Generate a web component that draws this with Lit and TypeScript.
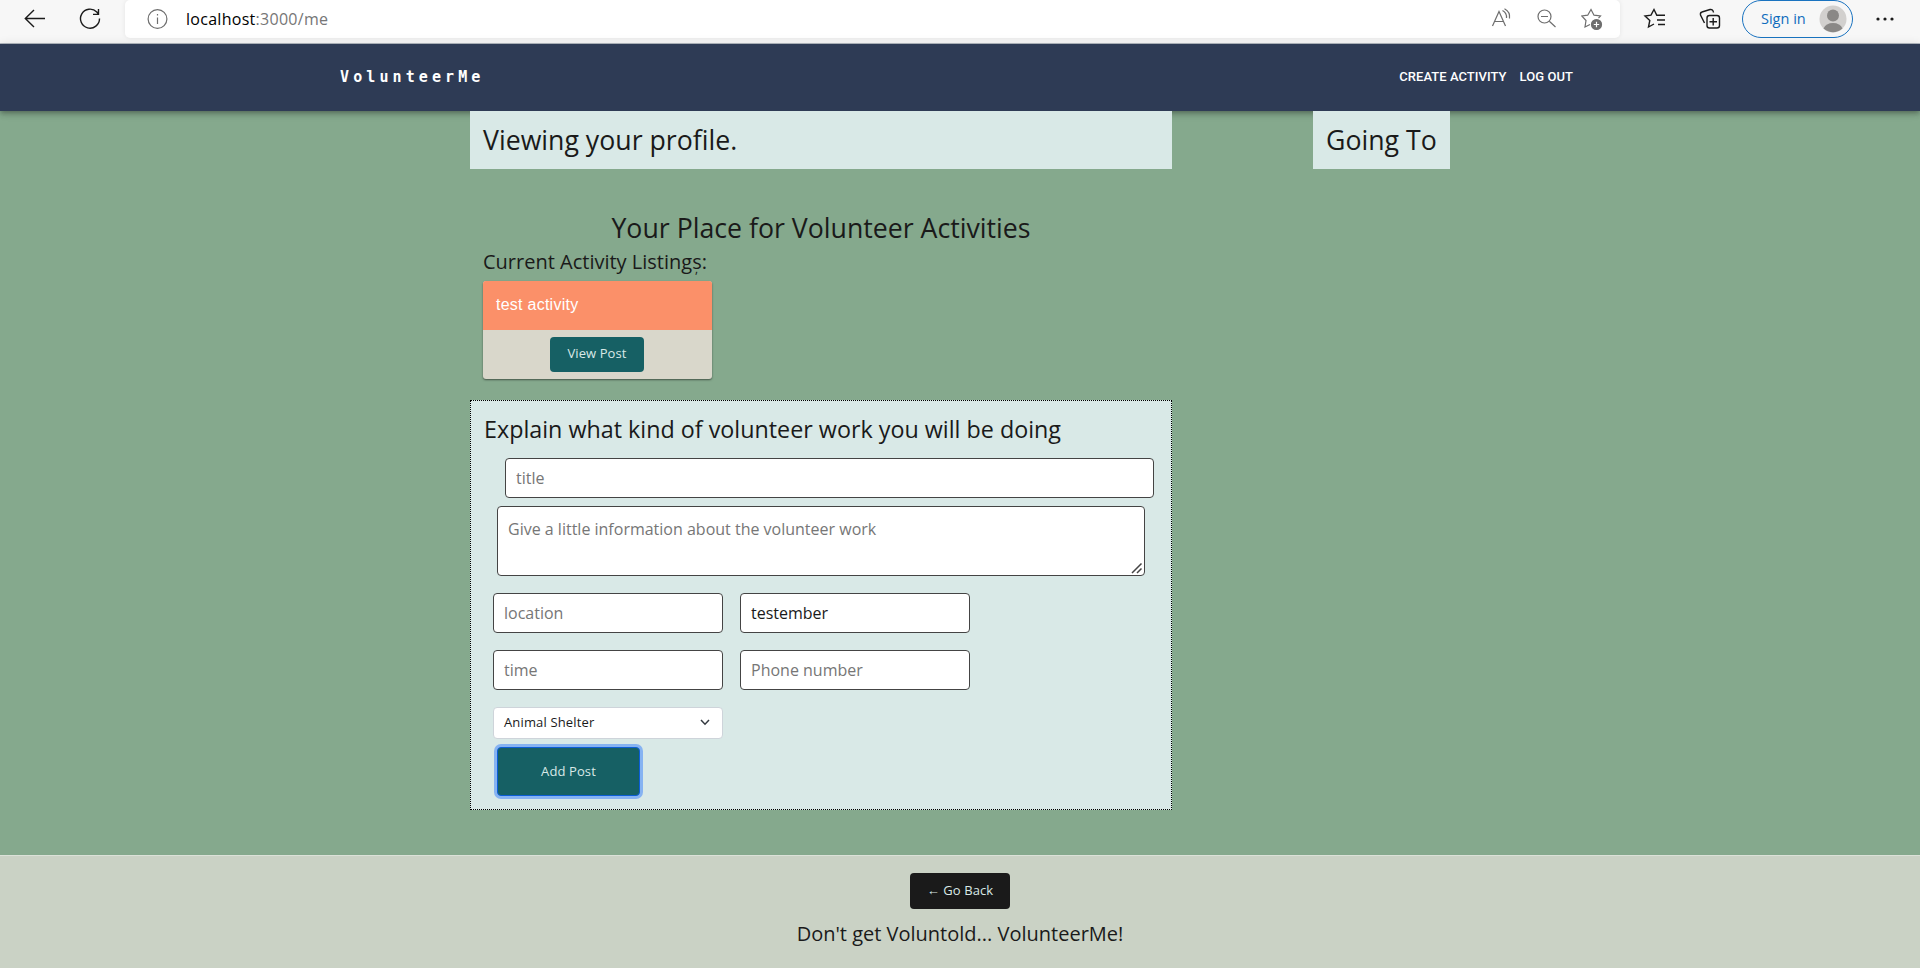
import { LitElement, html, css } from "lit";
import { customElement } from "lit/decorators.js";

@customElement("browser-bar")
class BrowserBar extends LitElement {
  static styles = css`
    :host {
      display: flex;
      height: 43px;
      background: #f7f7f7;
      border-bottom: 1px solid #b4bac2;
      font-family: "Open Sans", sans-serif;
    }
    .nav { display: flex; width: 125px; padding-left: 22px; box-sizing: border-box; gap: 32px; }
    .address {
      display: flex;
      width: 1495px;
      height: 38px;
      background: #fff;
      border-radius: 5px;
      box-shadow: 0 0 5px rgba(0, 0, 0, 0.08);
    }
    .info { margin-left: 20px; }
    .url { margin-left: 17px; width: 1305px; font-size: 16px; line-height: 38px; color: #767676; letter-spacing: 0.28px; }
    .url b { font-weight: 400; color: #000; }
    .tools { display: flex; gap: 21px; }
    svg { display: block; width: 24px; height: 38px; flex: none; fill: none; stroke: #1b1b1b; stroke-width: 1.4; }
    .address svg { stroke: #6e6e6e; stroke-width: 1.2; }
    .right { display: flex; padding-left: 23px; }
    .right svg + svg { margin-left: 31px; }
    .signin {
      display: flex;
      align-items: center;
      justify-content: space-between;
      box-sizing: border-box;
      width: 111px;
      height: 38px;
      margin: 0 20px 0 20px;
      padding: 0 5px 0 18px;
      border: 1.4px solid #1a73c0;
      border-radius: 19px;
      font-size: 14.5px;
      color: #0f6cbd;
    }
    .signin svg { width: 28px; height: 28px; stroke: none; }
  `;
  render() {
    return html`
      <div class="nav">
        <svg viewBox="0 0 24 38"><path d="M3 18.5H23M12 10L3.3 18.5L12 27" /></svg>
        <svg viewBox="0 0 24 38"><path d="M21.5 18.5A9.5 9.5 0 1 1 18.8 12L20.5 14M20.5 9V14.4H15" /></svg>
      </div>
      <div class="address">
        <svg class="info" viewBox="0 0 24 38"><circle cx="12.5" cy="19" r="9.4" /><path d="M12.5 17.5V24M12.5 14V15.5" /></svg>
        <div class="url"><b>localhost</b>:3000/me</div>
        <div class="tools">
          <svg viewBox="0 0 24 38"><path d="M1.5 26L8 11.5L14.5 26M3.8 21.5H12.2M11.5 10.5Q16 13 15.5 18M13.5 8.8Q19.5 12 18.5 18.5" /></svg>
          <svg viewBox="0 0 24 38"><circle cx="8.5" cy="16.5" r="6.5" /><path d="M13.3 21.3L19.5 27M5 16.5H12" /></svg>
          <svg viewBox="0 0 24 38"><path d="M9 24.5L4 27L5 20.5L0.8 16L6.7 15.2L10 9.5L13 15.2L19.5 16L17.5 18.2" /><circle cx="15.5" cy="24.5" r="5" fill="#6e6e6e" /><path d="M12.8 24.5H18.2M15.5 21.8V27.2" stroke="#fff" /></svg>
        </div>
      </div>
      <div class="right">
        <svg viewBox="0 0 24 38"><path d="M11 24L5.5 27L6.8 20.5L2 16L8 15.2L11 9.5L13.8 15.2H22M14 20H22M15 24.5H22" /></svg>
        <svg viewBox="0 0 24 38"><rect x="9" y="15.5" width="12.5" height="12.5" rx="2.5" /><path d="M15.2 18V25.5M11.5 21.7H19M6.5 23L2.5 15Q2 12.5 4 12L12 9.5Q15 9 15.5 12.5" /></svg>
        <div class="signin">
          Sign in
          <svg viewBox="0 0 28 28"><circle cx="14" cy="14" r="13.5" fill="#d2d0ce" /><circle cx="14" cy="10.5" r="6" fill="#8a8886" /><path d="M4.5 23.5Q7 18 14 18T23.5 23.5Q14 31 4.5 23.5Z" fill="#8a8886" /></svg>
        </div>
        <svg viewBox="0 0 24 38"><g fill="#1b1b1b" stroke="none"><circle cx="5" cy="19" r="1.6" /><circle cx="12" cy="19" r="1.6" /><circle cx="19" cy="19" r="1.6" /></g></svg>
      </div>
    `;
  }
}

@customElement("app-root")
class AppRoot extends LitElement {
  static styles = css`
    :host {
      display: flex;
      flex-direction: column;
      height: 968px;
      overflow: hidden;
      background: #85a98d;
      color: #1a1a1a;
      font: 400 16px/1.5 "Open Sans", sans-serif;
    }
    h1, h2, h3, h4, p { margin: 0; font-weight: 400; }
    .bar {
      flex: none;
      display: flex;
      align-items: center;
      justify-content: space-between;
      box-sizing: border-box;
      height: 67px;
      padding: 0 347px 2px 340px;
      background: #2e3b55;
      color: #fff;
      box-shadow: 0 2px 4px -1px rgba(0, 0, 0, 0.2), 0 4px 5px rgba(0, 0, 0, 0.14), 0 1px 10px rgba(0, 0, 0, 0.12);
    }
    .brand { font: 700 15px/20px "DejaVu Sans Mono", monospace; letter-spacing: 4.1px; }
    .links { display: flex; gap: 13px; font: 500 13px/20px Roboto, sans-serif; letter-spacing: 0.05px; }
    main { position: relative; flex: none; display: flex; height: 744px; padding-left: 470px; }
    .left { width: 702px; }
    .box {
      box-sizing: border-box;
      height: 58px;
      padding: 0 13px;
      background: #d9e9e7;
      font-size: 26.7px;
      line-height: 58px;
      white-space: nowrap;
    }
    .going { width: 137px; margin-left: 141px; }
    .tagline { margin-top: 39px; font-size: 26.7px; line-height: 40px; text-align: center; }
    .listings { padding-left: 13px; font-size: 20px; line-height: 28px; position: relative; }
    .stray { position: absolute; left: 225px; top: 7px; font-size: 12px; }
    .card { width: 229px; height: 98px; margin: 5px 0 0 13px; border-radius: 3px; overflow: hidden; background: #d9d7cb; box-shadow: 0 1px 2px rgba(0, 0, 0, 0.5); }
    .card-title { height: 49px; padding-left: 13px; background: #fb9069; color: #fff; font: 500 16px/47px "Liberation Sans", sans-serif; letter-spacing: 0.25px; }
    .card-body { display: flex; justify-content: center; padding: 7px 1px 0 0; }
    button { border: 0; padding: 0; border-radius: 4px; background: #166064; color: #d9e9e7; font: 400 13px/20px "Open Sans", sans-serif; letter-spacing: 0.1px; }
    .view { width: 94px; height: 35px; padding-bottom: 3px; }
    form { box-sizing: border-box; height: 410px; margin-top: 21px; border: 1px dotted #000; background: #d9e9e7; }
    .prompt { padding: 10px 0 0 13px; font-size: 23.3px; line-height: 36px; }
    input, textarea, .select {
      display: block;
      box-sizing: border-box;
      margin: 0;
      border: 1px solid #444;
      border-radius: 4px;
      background: #fff;
      color: #1a1a1a;
      font: 400 16px/24px "Open Sans", sans-serif;
    }
    input { height: 40px; width: 230px; padding: 0 10px; }
    ::placeholder { color: #767676; opacity: 1; }
    .title { width: 649px; margin: 11px 0 0 34px; }
    .area { position: relative; width: 648px; height: 70px; margin: 8px 0 0 26px; }
    textarea { width: 100%; height: 100%; padding: 10px; overflow: hidden; resize: none; }
    .grip { position: absolute; right: 2px; bottom: 2px; width: 12px; height: 12px; stroke: #444; stroke-width: 1.5; }
    .grid { display: grid; grid-template-columns: 230px 230px; gap: 17px; margin: 17px 0 0 22px; }
    .select { display: flex; align-items: center; justify-content: space-between; width: 230px; height: 32px; padding: 0 11px 2px 10px; border-color: #ced4da; font-size: 13px; letter-spacing: 0.15px; }
    .select svg { width: 12px; height: 12px; fill: none; stroke: #343a40; stroke-width: 1.5; }
    .add { display: block; width: 143px; height: 49px; margin: 8px 0 0 26px; padding-bottom: 2px; border: 1px solid #0b5ed7; box-shadow: 0 0 0 3px #86b3f2; }
    footer { flex: 1; display: flex; flex-direction: column; align-items: center; border-top: 1px solid #dbe2d8; background: #cad2c5; }
    .back { width: 100px; height: 36px; margin-top: 17px; padding-bottom: 2px; background: #1a1a1a; }
    .motto { margin-top: 10px; font-size: 20px; line-height: 30px; }
  `;
  render() {
    return html`
      <browser-bar></browser-bar>
      <header class="bar">
        <div class="brand">VolunteerMe</div>
        <nav class="links"><span>CREATE ACTIVITY</span><span>LOG OUT</span></nav>
      </header>
      <main>
        <section class="left">
          <h2 class="box">Viewing your profile.</h2>
          <h2 class="tagline">Your Place for Volunteer Activities</h2>
          <h4 class="listings">Current Activity Listings:<span class="stray">,</span></h4>
          <div class="card">
            <div class="card-title">test activity</div>
            <div class="card-body"><button class="view">View Post</button></div>
          </div>
          <form @submit=${(e: Event) => e.preventDefault()}>
            <h3 class="prompt">Explain what kind of volunteer work you will be doing</h3>
            <input class="title" placeholder="title" />
            <div class="area">
              <textarea placeholder="Give a little information about the volunteer work"></textarea>
              <svg class="grip" viewBox="0 0 12 12"><path d="M1 11L10.5 1.5M6 11L10.5 6.5" /></svg>
            </div>
            <div class="grid">
              <input placeholder="location" />
              <input .value=${"testember"} />
              <input placeholder="time" />
              <input placeholder="Phone number" />
              <div class="select">Animal Shelter<svg viewBox="0 0 12 12"><path d="M2 4L6 8.2L10 4" /></svg></div>
            </div>
            <button class="add">Add Post</button>
          </form>
        </section>
        <aside><h2 class="box going">Going To</h2></aside>
      </main>
      <footer>
        <button class="back">← Go Back</button>
        <p class="motto">Don't get Voluntold... VolunteerMe!</p>
      </footer>
    `;
  }
}
